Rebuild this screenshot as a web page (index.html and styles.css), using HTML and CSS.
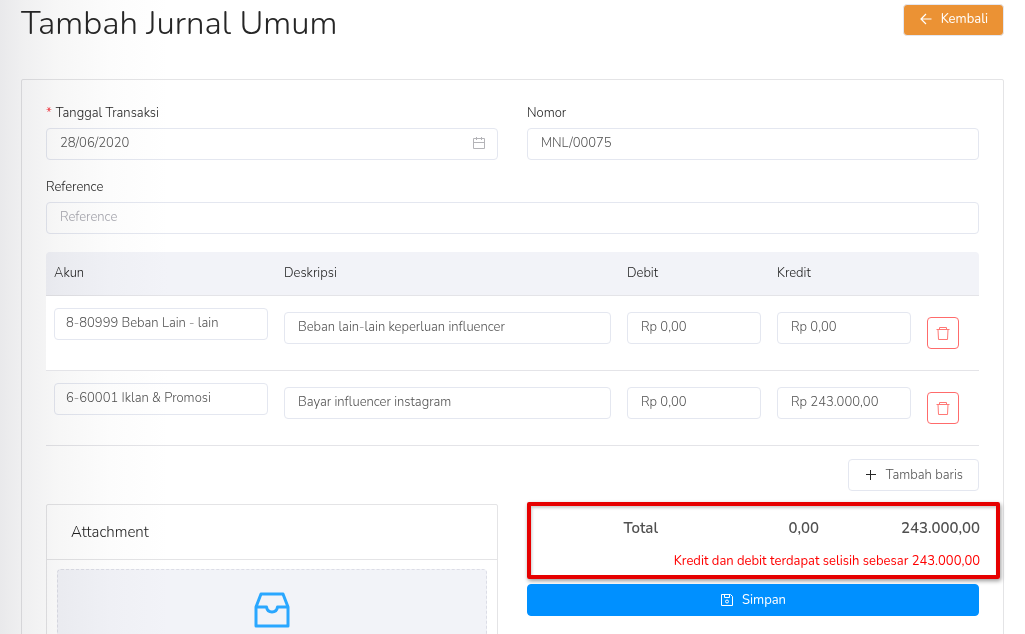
FILE: index.html
```html
<!DOCTYPE html>
<html lang="id">
<head>
<meta charset="utf-8">
<meta name="viewport" content="width=device-width, initial-scale=1">
<title>Tambah Jurnal Umum</title>
<link rel="stylesheet" href="styles.css">
</head>
<body>
<main class="page">
  <header class="page-header">
    <h1 class="page-title">Tambah Jurnal Umum</h1>
    <button type="button" class="btn btn-back">
      <svg class="icon" viewBox="0 0 14 14" fill="none" stroke="currentColor" stroke-width="1.200"><path d="M12.500 7H2M7 2 2 7 7 12"/></svg>
      <span>Kembali</span>
    </button>
  </header>

  <form class="card">
    <div class="columns">
      <div class="field">
        <label class="label" for="tanggal"><span class="required">*</span>Tanggal Transaksi</label>
        <div class="date-box">
          <input class="input" id="tanggal" type="text" value="28/06/2020">
          <svg class="date-icon" viewBox="0 0 14 14" fill="none" stroke="currentColor"><path d="M1.500 2.500h11v10h-11zM1.500 6.500h11M4.500 1v3M9.500 1v3"/></svg>
        </div>
      </div>
      <div class="field">
        <label class="label" for="nomor">Nomor</label>
        <input class="input" id="nomor" type="text" value="MNL/00075">
      </div>
    </div>
    <div class="field">
      <label class="label" for="reference">Reference</label>
      <input class="input" id="reference" type="text" placeholder="Reference">
    </div>

    <table class="lines">
      <thead>
        <tr>
          <th class="col-account">Akun</th>
          <th>Deskripsi</th>
          <th class="col-money">Debit</th>
          <th class="col-money">Kredit</th>
          <th class="col-action"></th>
        </tr>
      </thead>
      <tbody>
        <tr class="row-active">
          <td class="cell-account"><input class="input input-account" aria-label="Akun" value="8-80999 Beban Lain - lain"></td>
          <td><input class="input" aria-label="Deskripsi" value="Beban lain-lain keperluan influencer"></td>
          <td><input class="input" aria-label="Debit" value="Rp 0,00"></td>
          <td><input class="input" aria-label="Kredit" value="Rp 0,00"></td>
          <td class="cell-action"><button type="button" class="btn-delete" aria-label="Hapus"><svg class="icon" viewBox="0 0 14 14" fill="none" stroke="currentColor"><path d="M.5 3.500h13M3.500 3.500v-2h7v2M2 3.500l.5 10h9l.5-10"/></svg></button></td>
        </tr>
        <tr>
          <td class="cell-account"><input class="input input-account" aria-label="Akun" value="6-60001 Iklan &amp; Promosi"></td>
          <td><input class="input" aria-label="Deskripsi" value="Bayar influencer instagram"></td>
          <td><input class="input" aria-label="Debit" value="Rp 0,00"></td>
          <td><input class="input" aria-label="Kredit" value="Rp 243.000,00"></td>
          <td class="cell-action"><button type="button" class="btn-delete" aria-label="Hapus"><svg class="icon" viewBox="0 0 14 14" fill="none" stroke="currentColor"><path d="M.5 3.500h13M3.500 3.500v-2h7v2M2 3.500l.5 10h9l.5-10"/></svg></button></td>
        </tr>
      </tbody>
    </table>

    <div class="add-row">
      <button type="button" class="btn btn-add">
        <svg class="icon" viewBox="0 0 14 14" fill="none" stroke="currentColor"><path d="M6.500 2v10M2 6.500h10"/></svg>
        <span>Tambah baris</span>
      </button>
    </div>

    <div class="columns">
      <section class="attachment">
        <h2 class="attachment-title">Attachment</h2>
        <div class="attachment-body">
          <button type="button" class="dropzone" aria-label="Attachment">
            <svg class="inbox" viewBox="0 0 36 36" fill="none" stroke="currentColor" stroke-width="3" stroke-linejoin="round"><path d="M2 15 7 2h22l5 13v19H2zM2 15h10.500c.5 3 2.500 5 5.500 5s5-2 5.500-5H34"/></svg>
          </button>
        </div>
      </section>
      <section class="summary">
        <div class="totals">
          <div class="totals-row"><span>Total</span><span>0,00</span><span>243.000,00</span></div>
          <p class="error">Kredit dan debit terdapat selisih sebesar 243.000,00</p>
        </div>
        <button type="submit" class="btn btn-save">
          <svg class="icon" viewBox="0 0 14 14" fill="none" stroke="currentColor"><path d="M1.500 1.500h9l2 2v9h-11zM4.500 1.500v3h5v-3"/><circle cx="7" cy="8.500" r="1.500"/></svg>
          <span>Simpan</span>
        </button>
      </section>
    </div>
  </form>
</main>
</body>
</html>
```
FILE: styles.css
```css
* { box-sizing: border-box; }

body {
  height: 100vh;
  margin: 0;
  overflow: hidden;
  background: #fff;
  color: #505050;
  font: 300 13px/20px Nunito, Lato, "Open Sans", sans-serif;
}

/* Soft shade along the left edge of the window */
body::after {
  content: "";
  position: absolute;
  inset: 0 auto 0 0;
  width: 168px;
  background: linear-gradient(90deg, #e9e9eb 0, #f0f0f1 24px, #f7f7f7 60px, #fcfcfc 110px, #fff 100%);
  mix-blend-mode: multiply;
  pointer-events: none;
}

input, button { font: inherit; color: inherit; }

.page { padding: 4px 21px 0; }

.page-header {
  display: flex;
  justify-content: space-between;
  align-items: flex-start;
  height: 75px;
}

.page-title {
  margin: 0;
  color: #262626;
  font-size: 33px;
  font-weight: 300;
  line-height: 40px;
}

.btn {
  display: flex;
  align-items: center;
  justify-content: center;
  gap: 8px;
  height: 32px;
  padding: 0 15px;
  border: 1px solid #e4e7f0;
  border-radius: 4px;
  background: #fff;
}

.icon { width: 14px; height: 14px; flex: none; }

.btn-back { background: #eb9234; color: #fff; font-weight: 400; padding-bottom: 2px; }

.card {
  padding: 24px;
  border: 1px solid #e4e4e6;
  border-radius: 2px;
}

.columns {
  display: grid;
  grid-template-columns: 1fr 1fr;
  gap: 29px;
}

.field {
  min-width: 0;
  margin-bottom: 18px;
}

.label {
  display: block;
  height: 24px;
  line-height: 18px;
  color: #202020;
}

.required { margin-right: 4px; color: #f5222d; }

.input {
  display: block;
  width: 100%;
  height: 32px;
  padding: 0 13px 2px;
  border: 1px solid #e4e7f0;
  border-radius: 4px;
  outline: 0;
  background: #fff;
}

.input::placeholder { color: #a4a4ac; opacity: 1; }
.input-account { padding-left: 11px; }

.date-box { position: relative; }
.date-icon {
  position: absolute;
  top: 8px;
  right: 12px;
  width: 14px;
  height: 14px;
  color: #b4b4b8;
}

.lines {
  width: 100%;
  border-collapse: separate;
  border-spacing: 0;
  table-layout: fixed;
}

.lines th {
  height: 44px;
  padding: 0 8px 2px;
  border-bottom: 1px solid #e4e4e8;
  background: #f2f3f8;
  color: #202020;
  font-weight: 300;
  text-align: left;
}

.lines th:first-child { border-top-left-radius: 4px; }
.lines th:last-child { border-top-right-radius: 4px; }
.lines .col-account { width: 230px; }
.lines .col-money { width: 150px; }
.lines .col-action { width: 60px; }

.lines td {
  height: 75px;
  padding: 16px 8px 0;
  border-bottom: 1px solid #e4e4e8;
  vertical-align: top;
}

.lines .cell-account { padding-top: 12px; }
.lines .cell-action { padding-top: 21px; }

.row-active {
  position: relative;
  z-index: 1;
  background: #fff;
}

.btn-delete {
  display: grid;
  place-items: center;
  width: 32px;
  height: 32px;
  padding: 0;
  border: 1px solid #ff6b6b;
  border-radius: 4px;
  background: #fff;
  color: #ff7875;
}

.add-row {
  display: flex;
  justify-content: flex-end;
  padding: 13px 0;
}

.btn-add .icon { color: #262626; }

.attachment {
  border: 1px solid #e4e4e6;
  border-radius: 2px;
}

.attachment-title {
  margin: 0;
  padding: 15px 24px;
  border-bottom: 1px solid #e4e4e6;
  color: #202020;
  font-size: 15px;
  font-weight: 300;
  line-height: 24px;
}

.attachment-body { padding: 9px 10px; }

.dropzone {
  display: flex;
  justify-content: center;
  width: 100%;
  padding: 22px 0 80px;
  border: 1px dashed #dcdde6;
  border-radius: 4px;
  background: #f2f3f8;
}

.inbox { width: 36px; height: 36px; color: #2aa7ff; }

/* The highlight frame runs past the right edge of its column */
.totals {
  margin: -2px -21px 5px 0;
  padding: 12px 16px 4px;
  border: 4px solid #e60000;
  border-radius: 2px;
  box-shadow: 1px 2px 4px #00000066, inset 1px 2px 3px #00000033;
}

.totals-row {
  display: grid;
  grid-template-columns: 1fr 161px 161px;
  font-size: 15px;
  font-weight: 600;
  text-align: right;
}

.error {
  margin: 13px 0 0;
  color: #ff0000;
  font-weight: 400;
  text-align: right;
}

.btn-save {
  width: 100%;
  border-color: #0090ff;
  background: #0090ff;
  color: #fff;
  font-weight: 400;
}
```
